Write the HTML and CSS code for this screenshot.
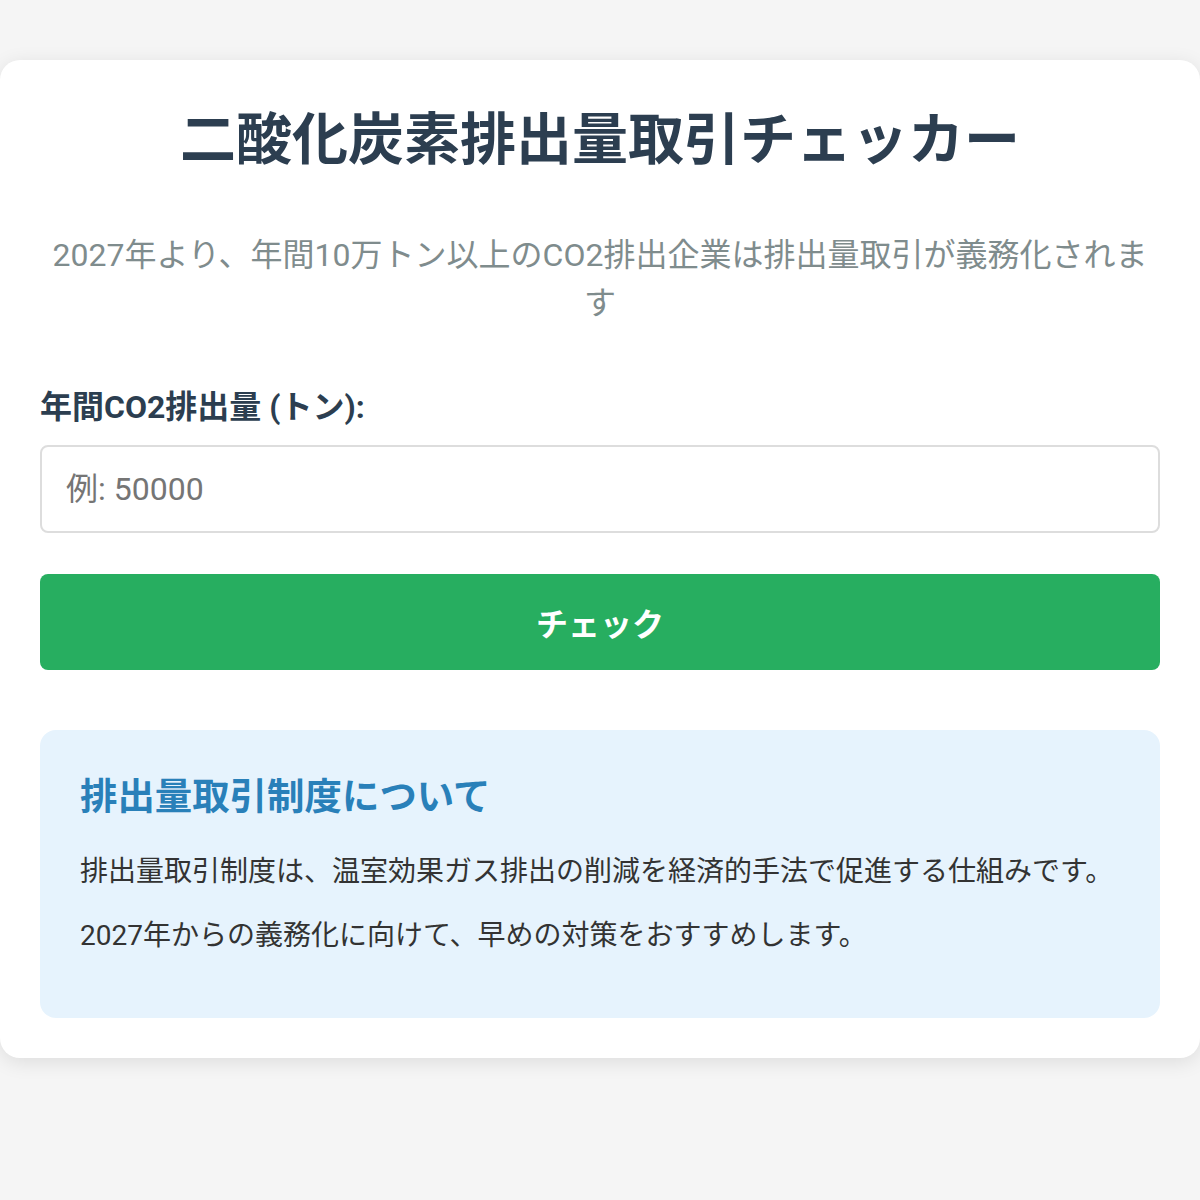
FILE: index.html
```html
<!DOCTYPE html>
<html lang="ja">
<head>
    <meta charset="UTF-8">
    <meta name="viewport" content="width=device-width, initial-scale=1.0">
    <title>二酸化炭素排出量取引チェッカー</title>
    <link rel="stylesheet" href="styles.css">
</head>
<body>
    <div class="container">
        <h1 class="title">二酸化炭素排出量取引チェッカー</h1>
        <p class="subtitle">2027年より、年間10万トン以上のCO2排出企業は排出量取引が義務化されます</p>

        <div class="form-group">
            <label class="form-label" for="emission">年間CO2排出量 (トン):</label>
            <input class="form-input" type="number" id="emission" placeholder="例: 50000">
        </div>

        <button class="btn-check" type="button">チェック</button>

        <div class="info-box">
            <h3 class="info-title">排出量取引制度について</h3>
            <p>排出量取引制度は、温室効果ガス排出の削減を経済的手法で促進する仕組みです。</p>
            <p>2027年からの義務化に向けて、早めの対策をおすすめします。</p>
        </div>
    </div>
</body>
</html>
```

FILE: styles.css
```css
* {
    box-sizing: border-box;
}
body {
    margin: 0;
    padding: 60px 0;
    background: #f5f5f5;
    font-family: Roboto, "Noto Sans CJK JP", sans-serif;
}
.container {
    background: #fff;
    border-radius: 20px;
    box-shadow: 0 4px 20px rgba(0, 0, 0, 0.1);
    padding: 40px;
}
.title {
    margin: 0;
    font-size: 56px;
    line-height: 80px;
    font-weight: 700;
    color: #2c3e50;
    text-align: center;
}
.subtitle {
    margin: 51px 0 0;
    font-size: 32px;
    line-height: 48px;
    color: #7f8c8d;
    text-align: center;
}
.form-group {
    margin-top: 57px;
}
.form-label {
    display: block;
    font-size: 32px;
    line-height: 46px;
    font-weight: 700;
    color: #2c3e50;
    margin-bottom: 15px;
}
.form-input {
    display: block;
    width: 100%;
    height: 88px;
    padding: 0 24px;
    border: 2px solid #ddd;
    border-radius: 8px;
    font-family: inherit;
    font-size: 32px;
    color: #333;
    outline: none;
}
.form-input::placeholder {
    color: #757575;
}
.btn-check {
    display: block;
    width: 100%;
    height: 96px;
    margin-top: 41px;
    border: none;
    border-radius: 8px;
    background: #27ae60;
    color: #fff;
    font-family: inherit;
    font-size: 32px;
    font-weight: 700;
    cursor: pointer;
}
.info-box {
    margin-top: 60px;
    background: #e6f3fd;
    border-radius: 16px;
    padding: 40px;
}
.info-title {
    margin: 0 0 26px;
    font-size: 37.44px;
    line-height: 54px;
    font-weight: 700;
    color: #2980b9;
}
.info-box p {
    margin: 20px 0;
    font-size: 28px;
    line-height: 44px;
    color: #333;
}
```
